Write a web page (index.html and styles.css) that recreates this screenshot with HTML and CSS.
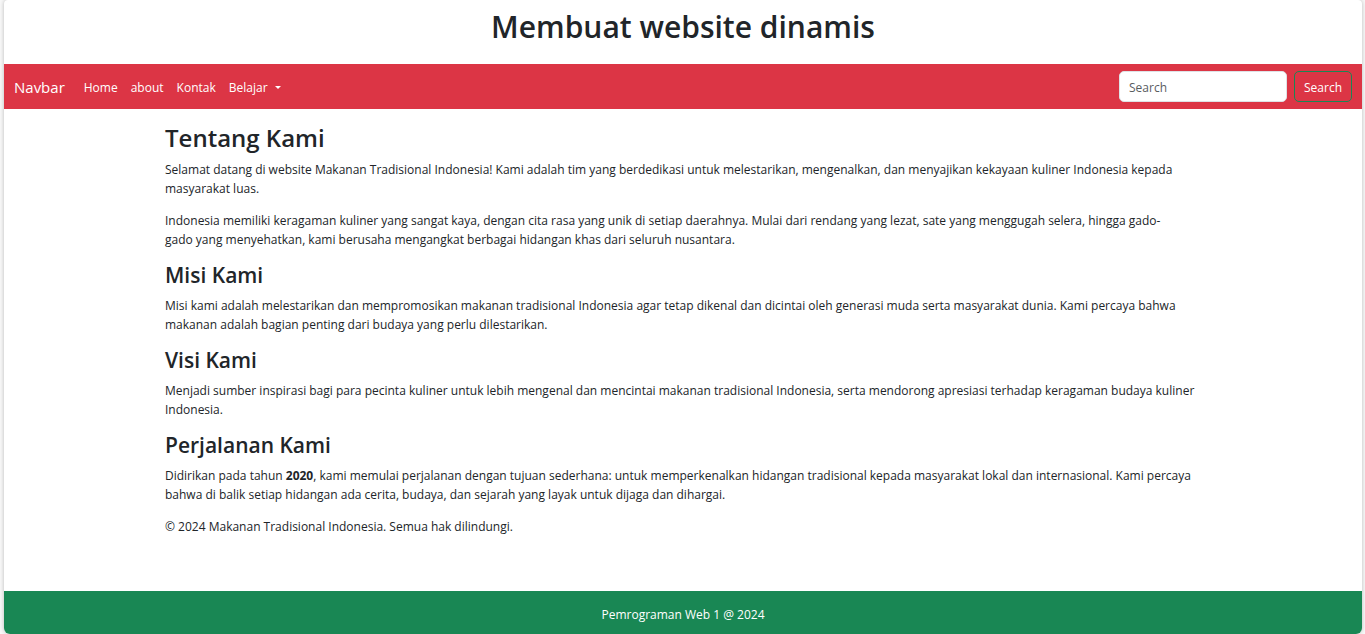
FILE: index.html
```html
<!DOCTYPE html>
<html lang="id">
<head>
<meta charset="utf-8">
<meta name="viewport" content="width=device-width, initial-scale=1">
<title>Membuat website dinamis</title>
<link rel="stylesheet" href="styles.css">
</head>
<body>
<div class="page">
  <header class="masthead"><h1 class="site-title">Membuat website dinamis</h1></header>
  <nav class="navbar">
    <a class="brand" href="#">Navbar</a>
    <ul class="nav-list">
      <li><a class="nav-link" href="#">Home</a></li>
      <li><a class="nav-link" href="#">about</a></li>
      <li><a class="nav-link" href="#">Kontak</a></li>
      <li><a class="nav-link dropdown" href="#">Belajar</a></li>
    </ul>
    <form class="search-form" role="search">
      <input class="search-input" type="search" placeholder="Search" aria-label="Search">
      <button class="search-button" type="submit">Search</button>
    </form>
  </nav>
  <main class="container">
    <h2 class="heading">Tentang Kami</h2>
    <p class="text">Selamat datang di website Makanan Tradisional Indonesia! Kami adalah tim yang berdedikasi untuk melestarikan, mengenalkan, dan menyajikan kekayaan kuliner Indonesia kepada masyarakat luas.</p>
    <p class="text">Indonesia memiliki keragaman kuliner yang sangat kaya, dengan cita rasa yang unik di setiap daerahnya. Mulai dari rendang yang lezat, sate yang menggugah selera, hingga gado-<br>gado yang menyehatkan, kami berusaha mengangkat berbagai hidangan khas dari seluruh nusantara.</p>
    <h3 class="subheading">Misi Kami</h3>
    <p class="text">Misi kami adalah melestarikan dan mempromosikan makanan tradisional Indonesia agar tetap dikenal dan dicintai oleh generasi muda serta masyarakat dunia. Kami percaya bahwa makanan adalah bagian penting dari budaya yang perlu dilestarikan.</p>
    <h3 class="subheading">Visi Kami</h3>
    <p class="text">Menjadi sumber inspirasi bagi para pecinta kuliner untuk lebih mengenal dan mencintai makanan tradisional Indonesia, serta mendorong apresiasi terhadap keragaman budaya kuliner Indonesia.</p>
    <h3 class="subheading">Perjalanan Kami</h3>
    <p class="text">Didirikan pada tahun <strong>2020</strong>, kami memulai perjalanan dengan tujuan sederhana: untuk memperkenalkan hidangan tradisional kepada masyarakat lokal dan internasional. Kami percaya bahwa di balik setiap hidangan ada cerita, budaya, dan sejarah yang layak untuk dijaga dan dihargai.</p>
    <p class="text">© 2024 Makanan Tradisional Indonesia. Semua hak dilindungi.</p>
  </main>
  <footer class="footer">Pemrograman Web 1 @ 2024</footer>
</div>
</body>
</html>
```

FILE: styles.css
```css
* { box-sizing: border-box; }
body {
  margin: 0;
  background: #f8f8f8;
  color: #212529;
  font-family: "Segoe UI", "Open Sans", "Noto Sans", sans-serif;
  font-size: 12px;
  line-height: 19px;
}
.page {
  margin: 0 3px 0 4px;
  background: #fff;
  border-radius: 4px 4px 6px 6px;
  box-shadow: 0 0 4px rgba(0, 0, 0, .25);
  overflow: hidden;
}
.masthead { padding: 8px 0 18px; }
.site-title {
  margin: 0;
  font-size: 30px;
  font-weight: 600;
  line-height: 38px;
  text-align: center;
}
.navbar {
  display: flex;
  align-items: center;
  padding: 7px 10px;
  background: #dc3545;
}
.brand {
  margin-right: 13px;
  padding-top: 2px;
  color: #fff;
  font-size: 15px;
  text-decoration: none;
}
.nav-list {
  display: flex;
  gap: 1px;
  margin: 0 auto 0 0;
  padding: 0;
  list-style: none;
}
.nav-link {
  display: block;
  padding: 7px 6px 5px;
  color: #fff;
  text-decoration: none;
}
.dropdown::after {
  content: "";
  display: inline-block;
  margin-left: 7px;
  vertical-align: 3px;
  border-top: 3px solid;
  border-left: 3px solid transparent;
  border-right: 3px solid transparent;
}
.search-form { display: flex; gap: 7px; }
.search-input, .search-button {
  height: 31px;
  border-radius: 5px;
  font: inherit;
}
.search-input {
  width: 168px;
  padding: 2px 9px 0;
  border: 1px solid #dee2e6;
  background: #fff;
  color: #212529;
}
.search-input::placeholder { color: #595c5f; opacity: 1; }
.search-button {
  padding: 2px 9px 0;
  border: 1px solid #198754;
  background: transparent;
  color: #fff;
}
.container {
  max-width: 1056px;
  margin: 0 auto;
  padding: 14px 10px 42px;
}
.heading, .subheading { font-weight: 600; }
.heading { margin: 0 0 7px; font-size: 24px; line-height: 30px; }
.subheading { margin: 0 0 8px; font-size: 21px; line-height: 26px; }
.text { margin: 0 0 13px; }
.footer {
  padding: 14px 10px 10px;
  background: #198754;
  color: #fff;
  text-align: center;
}
```
